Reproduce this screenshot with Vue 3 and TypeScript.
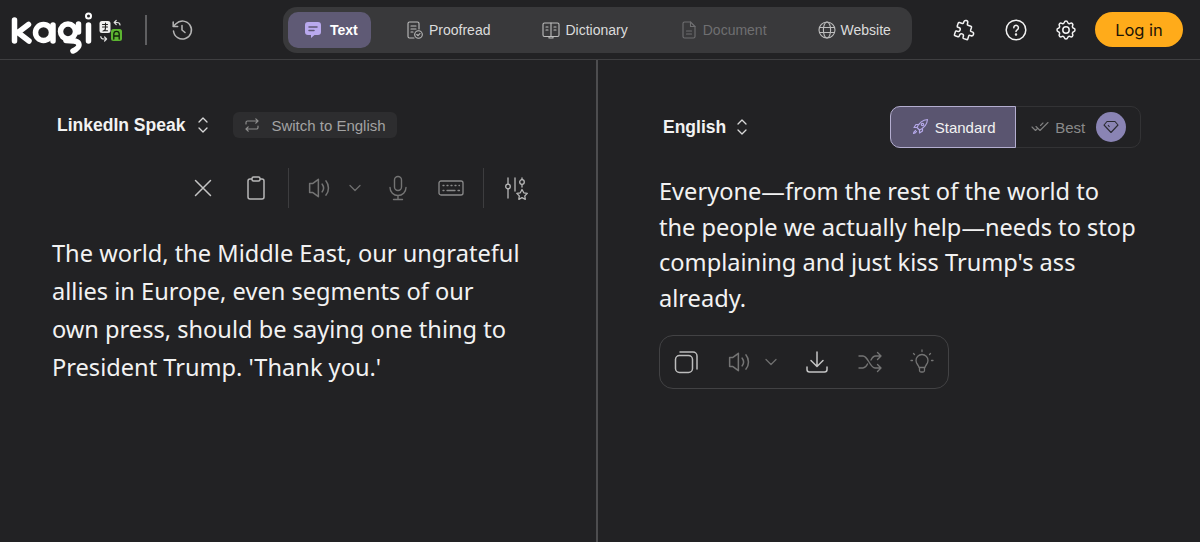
<script setup lang="ts">
const tabs = [
  { id: 'text', label: 'Text' },
  { id: 'proofread', label: 'Proofread' },
  { id: 'dictionary', label: 'Dictionary' },
  { id: 'document', label: 'Document' },
  { id: 'website', label: 'Website' },
]
</script>

<template>
  <div class="page">
    <header class="topbar">
      <div class="brand">
        <svg class="logo" width="125" height="52" viewBox="0 0 125 52" fill="none" stroke="#fff" stroke-width="5.5" stroke-linecap="round" stroke-linejoin="round">
          <path d="M14.500 16v21M28.500 20.500 18 28.500l11 8.500" />
          <circle cx="43.500" cy="28.500" r="8" />
          <path d="M53 21v16" />
          <circle cx="68" cy="27.500" r="7.500" />
          <path d="M78.500 20v8M66 36.500c8 0 13 .500 13 4.500 0 3-3 4.500-6 6" />
          <path d="M88.500 21v16" />
          <circle cx="88.500" cy="12" r="1" stroke-width="5" />
          <rect x="99.500" y="17" width="11" height="12" rx="2.500" fill="#eee" stroke="none" />
          <path d="M102.500 20.500h5M102.500 23h5M105.500 19v5c0 2-1 3-2.500 3M104 26.800h3.500" stroke="#222" stroke-width="1.100" />
          <rect x="111" y="25" width="11" height="12" rx="2.500" fill="#5cb531" stroke="none" />
          <path d="M113.800 35v-5a2.700 2.700 0 0 1 5.400 0v5M113.800 32h5.400" stroke="#10220a" stroke-width="1.300" />
          <path d="M120 21c0-1.800-1.500-2.500-3-2.500h-2.500m1.700-2-2 2 2 2M100.800 32.500c0 1.800 1.200 2.500 3 2.500h2.500m-1.700-2 2 2-2 2" stroke="#ddd" stroke-width="1.200" />
        </svg>
        <span class="brand-sep"></span>
        <svg class="history" width="24" height="24" viewBox="0 0 24 24" fill="none" stroke="#b5b5b5" stroke-width="1.500" stroke-linecap="round" stroke-linejoin="round">
          <path d="M3.500 13A9 9 0 1 0 6 5.800L3.500 8.300" />
          <path d="M3.200 4v4.500h4.500M12 7.500V12l3 2.500" />
        </svg>
      </div>

      <nav class="tabs">
        <button v-for="t in tabs" :key="t.id" class="tab" :class="[t.id, { active: t.id === 'text', off: t.id === 'document' }]">
          <svg v-if="t.id === 'text'" width="18" height="18" viewBox="0 0 18 18">
            <path d="M4 1h10a3 3 0 0 1 3 3v7a3 3 0 0 1-3 3h-3.500L7 17v-3H4a3 3 0 0 1-3-3V4a3 3 0 0 1 3-3z" fill="#b9a9ee" />
            <path d="M5 6h8M5 9.500h5" stroke="#5d5774" stroke-width="1.500" stroke-linecap="round" />
          </svg>
          <svg v-else-if="t.id === 'proofread'" width="18" height="18" viewBox="0 0 18 18" fill="none" stroke="currentColor" stroke-width="1.100" stroke-linecap="round" stroke-linejoin="round">
            <path d="M8 17H3.500A1.500 1.500 0 0 1 2 15.500v-13A1.500 1.500 0 0 1 3.500 1h8A1.500 1.500 0 0 1 13 2.500V8" />
            <path d="M5 5h5M5 8h5M5 11h2" />
            <circle cx="12.500" cy="13.500" r="3.800" />
            <path d="M10.800 13.500l1.200 1.200 2-2.200" />
          </svg>
          <svg v-else-if="t.id === 'dictionary'" width="18" height="18" viewBox="0 0 18 18" fill="none" stroke="currentColor" stroke-width="1.100" stroke-linecap="round" stroke-linejoin="round">
            <rect x="1" y="2" width="16" height="13.500" rx="1.500" />
            <path d="M9 2v13.500M7 15.500V17h4v-1.500" />
            <path d="M4 6h2M4 9h2M12 6h2M12 9h2" />
          </svg>
          <svg v-else-if="t.id === 'document'" width="18" height="18" viewBox="0 0 18 18" fill="none" stroke="currentColor" stroke-width="1.100" stroke-linecap="round" stroke-linejoin="round">
            <path d="M10.500 1H4.500A1.500 1.500 0 0 0 3 2.500v13A1.500 1.500 0 0 0 4.500 17h9a1.500 1.500 0 0 0 1.500-1.500V5.500z" />
            <path d="M10.500 1v4.500H15M6.500 10h5M6.500 13h5" />
          </svg>
          <svg v-else width="18" height="18" viewBox="0 0 18 18" fill="none" stroke="currentColor" stroke-width="1.100">
            <circle cx="9" cy="9" r="8" />
            <ellipse cx="9" cy="9" rx="3.600" ry="8" />
            <path d="M1.500 6.500h15M1.500 11.500h15" />
          </svg>
          <span>{{ t.label }}</span>
        </button>
      </nav>

      <div class="actions">
        <svg width="24" height="24" viewBox="0 0 24 24" fill="none" stroke="#f2f2f2" stroke-width="1.500" stroke-linejoin="round" stroke-linecap="round">
          <path transform="rotate(18 12 12) translate(.4 -.4)" d="M4 7h3a1 1 0 0 0 1-1V5a2 2 0 0 1 4 0v1a1 1 0 0 0 1 1h3a1 1 0 0 1 1 1v3a1 1 0 0 0 1 1h1a2 2 0 0 1 0 4h-1a1 1 0 0 0-1 1v3a1 1 0 0 1-1 1h-3a1 1 0 0 1-1-1v-1a2 2 0 0 0-4 0v1a1 1 0 0 1-1 1H4a1 1 0 0 1-1-1v-3a1 1 0 0 1 1-1h1a2 2 0 0 0 0-4H4a1 1 0 0 1-1-1V8a1 1 0 0 1 1-1" />
        </svg>
        <svg width="24" height="24" viewBox="0 0 24 24" fill="none" stroke="#f2f2f2" stroke-width="1.500" stroke-linecap="round">
          <circle cx="12" cy="12" r="9.800" />
          <path d="M9.800 9.700a2.300 2.300 0 1 1 3.600 1.900c-.8.500-1.400 1-1.400 1.900" />
          <circle cx="12" cy="16.500" r=".5" fill="#f2f2f2" />
        </svg>
        <svg width="24" height="24" viewBox="0 0 24 24" fill="none" stroke="#f2f2f2" stroke-width="1.500" stroke-linejoin="round">
          <path d="M10.325 4.317c.426-1.756 2.924-1.756 3.350 0a1.724 1.724 0 0 0 2.573 1.066c1.543-.94 3.310.826 2.370 2.370a1.724 1.724 0 0 0 1.065 2.572c1.756.426 1.756 2.924 0 3.350a1.724 1.724 0 0 0-1.066 2.573c.94 1.543-.826 3.310-2.370 2.370a1.724 1.724 0 0 0-2.572 1.065c-.426 1.756-2.924 1.756-3.350 0a1.724 1.724 0 0 0-2.573-1.066c-1.543.94-3.310-.826-2.370-2.370a1.724 1.724 0 0 0-1.065-2.572c-1.756-.426-1.756-2.924 0-3.350a1.724 1.724 0 0 0 1.066-2.573c-.94-1.543.826-3.310 2.370-2.370 1 .608 2.296.07 2.572-1.065z" />
          <circle cx="12" cy="12" r="3.200" />
        </svg>
        <button class="login">Log in</button>
      </div>
    </header>

    <main class="panes">
      <section class="pane source">
        <div class="lang-row">
          <span class="lang">LinkedIn Speak</span>
          <svg class="updown" width="14" height="18" viewBox="0 0 14 18" fill="none" stroke="#d8d8d8" stroke-width="1.300" stroke-linecap="round" stroke-linejoin="round">
            <path d="M3 6l4-4 4 4M3 12l4 4 4-4" />
          </svg>
          <button class="switch">
            <svg width="16" height="16" viewBox="0 0 16 16" fill="none" stroke="#8d8d8d" stroke-width="1.200" stroke-linecap="round" stroke-linejoin="round">
              <path d="M2 7V5.500A1.500 1.500 0 0 1 3.500 4H14M11.800 1.800 14 4l-2.200 2.200M14 9v1.500a1.500 1.500 0 0 1-1.500 1.500H2M4.200 9.800 2 12l2.200 2.200" />
            </svg>
            Switch to English
          </button>
        </div>

        <div class="toolbar">
          <svg class="t-x" width="22" height="22" viewBox="0 0 22 22" fill="none" stroke="#c4c4c4" stroke-width="1.500" stroke-linecap="round"><path d="M3.500 3.500l15 15M18.500 3.500l-15 15" /></svg>
          <svg class="t-clip" width="22" height="26" viewBox="0 0 22 26" fill="none" stroke="#b8b8b8" stroke-width="1.500" stroke-linejoin="round"><path d="M7 4H5a2 2 0 0 0-2 2v16a2 2 0 0 0 2 2h12a2 2 0 0 0 2-2V6a2 2 0 0 0-2-2h-2" /><rect x="7" y="2" width="8" height="4" rx="1.500" /></svg>
          <span class="t-sep s1"></span>
          <svg class="t-sound" width="24" height="24" viewBox="0 0 22 22" fill="none" stroke="#747474" stroke-width="1.400" stroke-linecap="round" stroke-linejoin="round"><path d="M9.500 3v16l-5-3.800H1.500V6.800h3zM13 7.500c1.500 2 1.500 5 0 7M16.500 4.500c3 3.500 3 9.500 0 13" /></svg>
          <svg class="t-chev" width="14" height="10" viewBox="0 0 14 10" fill="none" stroke="#6e6e6e" stroke-width="1.300" stroke-linecap="round" stroke-linejoin="round"><path d="M2 2.500l5 5 5-5" /></svg>
          <svg class="t-mic" width="20" height="26" viewBox="0 0 20 26" fill="none" stroke="#747474" stroke-width="1.400" stroke-linecap="round"><rect x="6.500" y="1.500" width="7" height="14" rx="3.500" /><path d="M2 12.500a8 8 0 0 0 16 0M10 20.500V24M5.500 24.500h9" /></svg>
          <svg class="t-kbd" width="26" height="18" viewBox="0 0 26 18" fill="none" stroke="#8a8a8a" stroke-width="1.300" stroke-linecap="round"><rect x="1" y="2" width="24" height="14" rx="2" /><path d="M5 6.500h1M9 6.500h1M13 6.500h1M17 6.500h1M21 6.500h.5M5 11.500h1M9 11.500h8M20 11.500h1.500" /></svg>
          <span class="t-sep s2"></span>
          <svg class="t-tune" width="24" height="24" viewBox="0 0 24 24" fill="none" stroke="#b8b8b8" stroke-width="1.300" stroke-linecap="round" stroke-linejoin="round"><path d="M4 2v6M4 13v9M11 2v13M18 2v1.500M18 9v2" /><circle cx="4" cy="10.500" r="2.300" /><circle cx="18" cy="6" r="2.300" /><path d="M18 13.500l1.800 3.300 3.500.6-2.500 2.500.5 3.400-3.300-1.600-3.200 1.600.5-3.400-2.500-2.500 3.500-.6z" /></svg>
        </div>

        <p class="body-text left">The world, the Middle East, our ungrateful allies in Europe, even segments of our own press, should be saying one thing to President Trump. 'Thank you.'</p>
      </section>

      <section class="pane target">
        <div class="lang-row right-row">
          <span class="lang">English</span>
          <svg class="updown" width="14" height="18" viewBox="0 0 14 18" fill="none" stroke="#d8d8d8" stroke-width="1.300" stroke-linecap="round" stroke-linejoin="round">
            <path d="M3 6l4-4 4 4M3 12l4 4 4-4" />
          </svg>
          <div class="quality">
            <button class="q standard">
              <svg width="18" height="18" viewBox="0 0 18 18" fill="none" stroke="#b5a8e8" stroke-width="1.200" stroke-linecap="round" stroke-linejoin="round">
                <path d="M6 9.500C8 5 11.500 2 16.500 1.500 16 6.500 13 10 8.500 12zM6 9.500H3l2-3h3M8.500 12v3l3-2v-3M4.500 12.500C3 13.500 2.500 15 2.500 15.500c.5 0 2-.5 3-2" />
                <circle cx="11.500" cy="6.500" r="1.200" />
              </svg>
              Standard
            </button>
            <button class="q best">
              <svg width="18" height="12" viewBox="0 0 18 12" fill="none" stroke="#808080" stroke-width="1.100" stroke-linecap="round" stroke-linejoin="round"><path d="M1 6l3.500 3.500L6 8M5 5.500 9 9.500 17 1.500M9.500 4.500 12 2" /></svg>
              <span>Best</span>
              <span class="gem">
                <svg width="16" height="14" viewBox="0 0 16 14" fill="none" stroke="#2b2b33" stroke-width="1.100" stroke-linejoin="round"><path d="M4 1.500h8l3 3.500-7 7.500L1 5zM5 5l1.500 2" /></svg>
              </span>
            </button>
          </div>
        </div>

        <p class="body-text right">Everyone—from the rest of the world to the people we actually help—needs to stop complaining and just kiss Trump's ass already.</p>

        <div class="result-bar">
          <svg width="24" height="24" viewBox="0 0 24 24" fill="none" stroke="#bdbdbd" stroke-width="1.500" stroke-linejoin="round"><rect x="1.500" y="5.500" width="17" height="17" rx="4" /><path d="M6 2h13a4 4 0 0 1 4 4v13" stroke-linecap="round" /></svg>
          <svg class="b-sound" width="24" height="24" viewBox="0 0 22 22" fill="none" stroke="#747474" stroke-width="1.400" stroke-linecap="round" stroke-linejoin="round"><path d="M9.500 3v16l-5-3.800H1.500V6.800h3zM13 7.500c1.500 2 1.500 5 0 7M16.500 4.500c3 3.500 3 9.500 0 13" /></svg>
          <svg class="b-chev" width="14" height="10" viewBox="0 0 14 10" fill="none" stroke="#6e6e6e" stroke-width="1.300" stroke-linecap="round" stroke-linejoin="round"><path d="M2 2.500l5 5 5-5" /></svg>
          <svg class="b-down" width="24" height="24" viewBox="0 0 24 24" fill="none" stroke="#c4c4c4" stroke-width="1.500" stroke-linecap="round" stroke-linejoin="round"><path d="M12 2v14M6 10.500l6 6 6-6M2 17v2.500A2.500 2.500 0 0 0 4.500 22h15a2.500 2.500 0 0 0 2.500-2.500V17" /></svg>
          <svg class="b-shuf" width="24" height="22" viewBox="0 0 24 22" fill="none" stroke="#747474" stroke-width="1.400" stroke-linecap="round" stroke-linejoin="round"><path d="M1 5h4c5 0 7 12 12 12h6M1 17h4c2 0 3.500-2 4.500-4M13 9c1-2 2.500-4 4.500-4H23M19.500 1.500 23 5l-3.500 3.500M19.500 13.500 23 17l-3.500 3.500" /></svg>
          <svg class="b-bulb" width="24" height="26" viewBox="0 0 24 26" fill="none" stroke="#747474" stroke-width="1.300" stroke-linecap="round" stroke-linejoin="round"><path d="M9 18.500c0-2-3-3.500-3-7a6 6 0 0 1 12 0c0 3.500-3 5-3 7zM9.500 18.500v3a1.500 1.500 0 0 0 1.500 1.500h2a1.500 1.500 0 0 0 1.500-1.500v-3M12 1v1.500M3.500 4.500l1 1M20.500 4.500l-1 1M1 11.500h1.500M21.500 11.500H23" /></svg>
        </div>
      </section>
    </main>
  </div>
</template>

<style>
html, body { background: #222224; }
</style>

<style scoped>
.page {
  width: 1200px;
  height: 542px;
  background: #222224;
  overflow: hidden;
  display: flex;
  flex-direction: column;
  font-family: "Liberation Sans", Arial, sans-serif;
}

svg { display: block; flex: none; }
button {
  border: 0;
  background: none;
  font: inherit;
  cursor: pointer;
  padding: 0;
}

.topbar {
  height: 60px;
  box-sizing: border-box;
  border-bottom: 1px solid #3f3f41;
  display: flex;
  align-items: center;
  flex: none;
}
.brand {
  width: 283px;
  flex: none;
  display: flex;
  align-items: center;
}
.brand-sep {
  width: 2px;
  height: 30px;
  background: #5f5f61;
  margin-left: 20px;
}
.history { margin-left: 23px; }

.tabs {
  display: flex;
  align-items: center;
  gap: 2px;
  box-sizing: border-box;
  width: 629px;
  height: 46px;
  padding: 5px;
  background: #39393b;
  border-radius: 14px;
}
.tab {
  height: 36px;
  flex: none;
  display: flex;
  align-items: center;
  gap: 5px;
  padding: 0 25px;
  font-size: 14px;
  color: #dcdcdc;
  border-radius: 10px;
}
.tab svg { color: #bdbdbd; }
.tab.active {
  width: 83px;
  padding: 0 0 0 16px;
  box-sizing: border-box;
  margin-right: 8px;
  background: #5f5a75;
  color: #fff;
  font-weight: 700;
  gap: 8px;
}
.tab.off,
.tab.off svg { color: #6f6f71; }
.tab.website { margin-left: -1px; }

.actions {
  margin-left: 41px;
  display: flex;
  align-items: center;
  flex: none;
}
.actions svg + svg { margin-left: 26.500px; }
.login {
  margin-left: 17px;
  width: 88px;
  height: 35px;
  border-radius: 18px;
  background: #ffab1a;
  color: #1d1406;
  font-family: Inter, sans-serif;
  font-size: 16.500px;
}

.panes {
  flex: 1;
  display: flex;
  min-height: 0;
}
.pane { box-sizing: border-box; }
.source {
  width: 598px;
  border-right: 2px solid #4d4d4f;
  padding: 45px 0 0 52px;
}
.target {
  flex: 1;
  padding: 47px 0 0 61px;
}

.lang-row {
  height: 40px;
  display: flex;
  align-items: center;
}
.lang {
  margin-left: 5px;
  font-size: 17.500px;
  font-weight: 700;
  color: #f2f2f2;
}
.updown { margin-left: 11px; }
.switch {
  margin-left: 23px;
  height: 26px;
  width: 164px;
  display: flex;
  align-items: center;
  gap: 11px;
  padding-left: 11px;
  box-sizing: border-box;
  background: #2d2d2f;
  border-radius: 6px;
  color: #a3a3a3;
  font-size: 15px;
  white-space: nowrap;
}

.toolbar {
  width: 476px;
  height: 40px;
  margin-top: 23px;
  display: flex;
  align-items: center;
  justify-content: flex-end;
}
.t-clip { margin-left: 31px; }
.t-sep {
  width: 1px;
  height: 40px;
  background: #3d3d3f;
}
.s1 { margin-left: 21px; }
.t-sound { margin-left: 19px; }
.t-chev { margin-left: 16px; }
.t-mic { margin-left: 26px; }
.t-kbd { margin-left: 30px; }
.s2 { margin-left: 19px; }
.t-tune { margin-left: 20px; }

.body-text {
  margin: 0;
  font-family: "Noto Sans", sans-serif;
  font-size: 23.600px;
  color: #f2f2f2;
}
.body-text.left {
  width: 470px;
  margin-top: 26px;
  line-height: 38px;
}
.body-text.right {
  width: 480px;
  margin-top: 27px;
  line-height: 35.500px;
}

.right-row .lang { margin-left: 4px; }
.right-row .updown { margin-left: 9px; }
.quality {
  margin-left: 141px;
  display: flex;
  width: 251px;
  height: 42px;
  border-radius: 10px;
  border: 1px solid #333335;
  box-sizing: border-box;
}
.q {
  display: flex;
  align-items: center;
  font-size: 15px;
  flex: none;
}
.standard {
  width: 126px;
  height: 42px;
  margin: -1px 0 0 -1px;
  justify-content: center;
  gap: 6px;
  background: #5a5570;
  border: 1px solid #b4aed0;
  border-radius: 10px 0 0 10px;
  color: #f2f2f2;
  box-sizing: border-box;
}
.best {
  flex: 1;
  padding-left: 15px;
  gap: 6px;
  color: #8a8a8a;
  height: 40px;
}
.gem {
  width: 30px;
  height: 30px;
  border-radius: 50%;
  background: #8a84b4;
  display: flex;
  align-items: center;
  justify-content: center;
  margin-left: 5px;
}

.result-bar {
  width: 290px;
  height: 54px;
  margin-top: 19px;
  box-sizing: border-box;
  border: 1px solid #424244;
  border-radius: 14px;
  display: flex;
  align-items: center;
  padding-left: 14px;
}
.b-sound { margin-left: 30px; }
.b-chev { margin-left: 12px; }
.b-down { margin-left: 27px; }
.b-shuf { margin-left: 29px; }
.b-bulb { margin-left: 28px; }
</style>
